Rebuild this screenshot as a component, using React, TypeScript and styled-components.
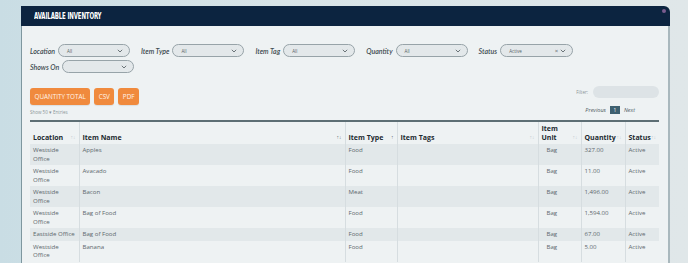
import React from "react";
import styled, { createGlobalStyle } from "styled-components";

const Global = createGlobalStyle`
  html, body { margin: 0; padding: 0; }
  body {
    width: 688px; height: 263px; overflow: hidden;
    background: linear-gradient(90deg, #c9dde4 0%, #d8e4e8 40%, #e0e7e9 100%);
    font-family: "Open Sans", "Liberation Sans", sans-serif;
  }
`;

const Panel = styled.div`
  margin: 6px 0 0 21px;
  width: 649px;
`;

const Header = styled.div`
  height: 20px;
  background: #0c2440;
  border-top-right-radius: 6px;
  display: flex;
  align-items: center;
  padding-left: 13px;
  position: relative;
`;

const Title = styled.div`
  font-family: "DejaVu Sans Condensed", "DejaVu Sans", sans-serif;
  font-weight: bold;
  font-size: 8px;
  color: #ffffff;
  letter-spacing: -0.2px;
  transform: scaleX(0.76);
  transform-origin: left center;
`;

const Dot = styled.span`
  position: absolute;
  right: 4px;
  top: 3px;
  width: 4px;
  height: 4px;
  border-radius: 50%;
  background: #7a5c8e;
`;

const Body = styled.div`
  background: #eef2f3;
  border-left: 1px solid #7e979f;
  border-right: 2px solid #a9b8bd;
  padding: 18px 9px 0 8px;
  height: 240px;
  box-sizing: border-box;
`;

const FilterRow = styled.div<{ $mt?: number }>`
  display: flex;
  align-items: center;
  gap: 11px;
  height: 13px;
  margin-top: ${(p) => p.$mt ?? 0}px;
`;

const Field = styled.div`
  display: flex;
  align-items: center;
  gap: 3px;
`;

const Label = styled.span`
  font-family: "Lato", "Open Sans", sans-serif;
  font-style: italic;
  font-weight: 600;
  font-size: 7px;
  color: #3d4a50;
`;

const Select = styled.div<{ $w: number }>`
  width: ${(p) => p.$w}px;
  height: 13px;
  border: 1px solid #97a3a8;
  border-radius: 7px;
  background: #e3e8ea;
  display: flex;
  align-items: center;
  padding: 0 6px 0 8px;
  box-sizing: border-box;
  font-size: 4.5px;
  color: #555f63;
`;

const SelText = styled.span`
  flex: 1;
`;

const Chevron = styled.svg`
  width: 6px;
  height: 4px;
`;

const Clear = styled.span`
  font-size: 6px;
  color: #555f63;
  margin-right: 2px;
`;

const Toolbar = styled.div`
  display: flex;
  justify-content: space-between;
  align-items: flex-start;
  margin-top: 15px;
`;

const Buttons = styled.div`
  display: flex;
  gap: 4px;
`;

const Btn = styled.div`
  height: 17px;
  padding: 0 4.5px;
  background: #f08a3d;
  border-radius: 3px;
  display: flex;
  align-items: center;
  font-size: 6.3px;
  color: #fff4ea;
  text-transform: uppercase;
  box-shadow: 0 1px 1px rgba(0, 0, 0, 0.08);
`;

const FilterBox = styled.div`
  display: flex;
  align-items: center;
  gap: 5px;
  margin-top: -2px;
  font-size: 4.5px;
  color: #8a9498;
`;

const FilterInput = styled.div`
  width: 66px;
  height: 12px;
  border-radius: 6px;
  background: #dde3e6;
`;

const InfoRow = styled.div`
  display: flex;
  justify-content: space-between;
  align-items: center;
  margin-top: 1px;
  height: 12px;
`;

const Small = styled.span`
  font-size: 4.5px;
  color: #8a9498;
`;

const Pager = styled.div`
  display: flex;
  align-items: center;
  gap: 4px;
  font-size: 5.5px;
  font-style: italic;
  color: #4d5a5f;
  margin-right: 24px;
  margin-top: -4px;
`;

const PageNum = styled.span`
  width: 10px;
  height: 8px;
  background: #3e6070;
  color: #fff;
  font-style: normal;
  font-size: 5px;
  display: flex;
  align-items: center;
  justify-content: center;
`;

const Table = styled.table`
  margin-top: 2px;
  width: 629px;
  border-collapse: collapse;
  table-layout: fixed;
  border-top: 2px solid #5d6e74;
`;

const Th = styled.th<{ $w: number }>`
  box-sizing: border-box;
  width: ${(p) => p.$w}px;
  height: 23px;
  padding: 0 3px 2px 3px;
  text-align: left;
  vertical-align: bottom;
  font-size: 7px;
  line-height: 8.5px;
  font-weight: 700;
  color: #1d2a30;
  border-left: 1px solid #d6dde0;
  position: relative;
  &:first-child { border-left: none; }
`;

const Sort = styled.span<{ $dark?: boolean }>`
  position: absolute;
  right: 3px;
  bottom: 3px;
  font-size: 5px;
  font-weight: 400;
  color: ${(p) => (p.$dark ? "#6a767b" : "#c3ccd0")};
`;

const Tr = styled.tr<{ $striped: boolean }>`
  background: ${(p) => (p.$striped ? "#e2e8ea" : "transparent")};
`;

const Td = styled.td<{ $pl?: number }>`
  box-sizing: border-box;
  padding: 2px 3px 2px ${(p) => p.$pl ?? 3}px;
  vertical-align: top;
  font-size: 6.1px;
  line-height: 8.5px;
  color: #5c676c;
  border-left: 1px solid #d6dde0;
  &:first-child { border-left: none; }
`;

const Chev = () => (
  <Chevron viewBox="0 0 6 4">
    <path d="M0.8 0.8 L3 3 L5.2 0.8" fill="none" stroke="#5d676b" strokeWidth="0.9" />
  </Chevron>
);

const filters1 = [
  { label: "Location", value: "All", w: 72 },
  { label: "Item Type", value: "All", w: 72 },
  { label: "Item Tag", value: "All", w: 72 },
  { label: "Quantity", value: "All", w: 72 },
  { label: "Status", value: "Active", w: 73, clear: true },
];

const cols = [
  { name: "Location", w: 49 },
  { name: "Item Name", w: 266, dark: true, arrows: "↑↓" },
  { name: "Item Type", w: 52, dark: true, arrows: "↑" },
  { name: "Item Tags", w: 141 },
  { name: "Item Unit", w: 43 },
  { name: "Quantity", w: 44 },
  { name: "Status", w: 34 },
];

const rows = [
  ["Westside Office", "Apples", "Food", "", "Bag", "327.00", "Active"],
  ["Westside Office", "Avacado", "Food", "", "Bag", "11.00", "Active"],
  ["Westside Office", "Bacon", "Meat", "", "Bag", "1,496.00", "Active"],
  ["Westside Office", "Bag of Food", "Food", "", "Bag", "1,594.00", "Active"],
  ["Eastside Office", "Bag of Food", "Food", "", "Bag", "67.00", "Active"],
  ["Westside Office", "Banana", "Food", "", "Bag", "5.00", "Active"],
];

export default function App() {
  return (
    <>
      <Global />
      <Panel>
        <Header>
          <Title>AVAILABLE INVENTORY</Title>
          <Dot />
        </Header>
        <Body>
          <FilterRow>
            {filters1.map((f) => (
              <Field key={f.label}>
                <Label>{f.label}</Label>
                <Select $w={f.w}>
                  <SelText>{f.value}</SelText>
                  {f.clear && <Clear>×</Clear>}
                  <Chev />
                </Select>
              </Field>
            ))}
          </FilterRow>
          <FilterRow $mt={3}>
            <Field>
              <Label>Shows On</Label>
              <Select $w={72}>
                <SelText></SelText>
                <Chev />
              </Select>
            </Field>
          </FilterRow>
          <Toolbar>
            <Buttons>
              <Btn>Quantity Total</Btn>
              <Btn>CSV</Btn>
              <Btn>PDF</Btn>
            </Buttons>
            <FilterBox>
              <span>Filter:</span>
              <FilterInput />
            </FilterBox>
          </Toolbar>
          <InfoRow>
            <Small>Show 50 ▾ Entries</Small>
            <Pager>
              <span>Previous</span>
              <PageNum>1</PageNum>
              <span>Next</span>
            </Pager>
          </InfoRow>
          <Table>
            <thead>
              <tr>
                {cols.map((c) => (
                  <Th key={c.name} $w={c.w}>
                    {c.name === "Item Unit" ? (
                      <>
                        Item
                        <br />
                        Unit
                      </>
                    ) : (
                      c.name
                    )}
                    <Sort $dark={c.dark}>{c.arrows ?? "↑↓"}</Sort>
                  </Th>
                ))}
              </tr>
            </thead>
            <tbody>
              {rows.map((r, i) => (
                <Tr key={i} $striped={i % 2 === 0}>
                  {r.map((v, j) => (
                    <Td key={j} $pl={j === 4 ? 8 : 3}>
                      {v}
                    </Td>
                  ))}
                </Tr>
              ))}
            </tbody>
          </Table>
        </Body>
      </Panel>
    </>
  );
}
